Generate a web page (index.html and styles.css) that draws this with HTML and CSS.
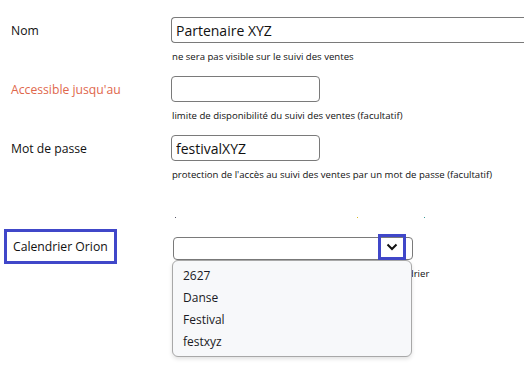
FILE: index.html
```html
<!DOCTYPE html>
<html lang="fr">
<head>
    <meta charset="UTF-8">
    <meta name="viewport" content="width=device-width, initial-scale=1.0">
    <title>Suivi des ventes - partenaire</title>
    <link rel="stylesheet" href="styles.css">
</head>
<body>
    <div class="form">
        <div class="field">
            <label class="label">Nom</label>
            <input class="input input-wide" type="text" value="Partenaire XYZ">
            <div class="hint">ne sera pas visible sur le suivi des ventes</div>
        </div>

        <div class="field">
            <label class="label label-warn">Accessible jusqu'au</label>
            <input class="input" type="text" value="">
            <div class="hint">limite de disponibilité du suivi des ventes (facultatif)</div>
        </div>

        <div class="field">
            <label class="label">Mot de passe</label>
            <input class="input" type="text" value="festivalXYZ">
            <div class="hint">protection de l'accès au suivi des ventes par un mot de passe (facultatif)</div>
        </div>

        <div class="dots">
            <span class="dot dot-a"></span>
            <span class="dot dot-b"></span>
            <span class="dot dot-c"></span>
        </div>

        <div class="field field-select">
            <label class="label"><span class="label-box">Calendrier Orion</span></label>
            <div class="select-wrap">
                <div class="select">
                    <span class="select-arrow">
                        <svg width="12" height="8" viewBox="0 0 12 8">
                            <path d="M1.5 1.5 L6 6 L10.5 1.5" fill="none" stroke="#111" stroke-width="2"/>
                        </svg>
                    </span>
                </div>
                <ul class="dropdown">
                    <li>2627</li>
                    <li>Danse</li>
                    <li>Festival</li>
                    <li>festxyz</li>
                </ul>
            </div>
            <div class="hint">liaisons du suivi des ventes à un événement du calendrier</div>
        </div>
    </div>
</body>
</html>
```

FILE: styles.css
```css
body {
    margin: 0;
    min-height: 100vh;
    font-family: "Open Sans", "Noto Sans", sans-serif;
    background: white;
    color: #111;
}
.form {
    padding: 17px 0 0 11px;
}
.field {
    display: grid;
    grid-template-columns: 160px 1fr;
    row-gap: 7px;
    margin-bottom: 13px;
}
.label {
    font-size: 12.2px;
    align-self: center;
    color: #111;
}
.label-warn {
    color: #e0674c;
}
.input {
    grid-column: 2;
    box-sizing: border-box;
    width: 149px;
    height: 26px;
    border: 1px solid #7a7a7a;
    border-radius: 4px;
    padding: 0 4px;
    font-family: "Open Sans", "Noto Sans", sans-serif;
    font-size: 14px;
    color: #111;
    outline: none;
}
.input-wide {
    width: 353px;
    border-right: none;
    border-radius: 4px 0 0 4px;
}
.hint {
    grid-column: 2;
    padding-left: 1px;
    font-size: 9.6px;
    line-height: 13px;
    color: #111;
}
.dots {
    position: relative;
    height: 1px;
    margin-top: 36px;
}
.dot {
    position: absolute;
    top: 0;
    width: 1px;
    height: 1px;
}
.dot-a { left: 164px; background: #556; }
.dot-b { left: 346px; background: #d8b820; }
.dot-c { left: 413px; background: #3a9a9a; }

.field-select {
    margin-top: 11px;
    row-gap: 3px;
}
.label-box {
    box-sizing: border-box;
    display: inline-flex;
    align-items: center;
    height: 35px;
    margin-left: -7px;
    padding: 0 6px 1px 6px;
    border: 3px solid #4047c9;
    font-size: 12.2px;
}
.select-wrap {
    position: relative;
    align-self: start;
    margin: 8px 0 0 2px;
}
.select {
    box-sizing: border-box;
    width: 240px;
    height: 23px;
    border: 1px solid #7a7a7a;
    border-radius: 4px;
    background: white;
    position: relative;
}
.select-arrow {
    position: absolute;
    top: -4px;
    right: 6px;
    box-sizing: border-box;
    width: 28px;
    height: 26px;
    border: 3px solid #4047c9;
    display: flex;
    align-items: center;
    justify-content: center;
}
.dropdown {
    position: absolute;
    top: 23px;
    left: -1px;
    box-sizing: border-box;
    width: 240px;
    margin: 0;
    padding: 4px 0 3px 0;
    list-style: none;
    background: #f7f8fa;
    border: 1px solid #a8a8a8;
    border-radius: 6px;
    box-shadow: 0 2px 4px rgba(0, 0, 0, 0.12);
    z-index: 2;
}
.dropdown li {
    height: 22px;
    line-height: 22px;
    padding-left: 10px;
    font-size: 12px;
    color: #1a1a24;
}
```
